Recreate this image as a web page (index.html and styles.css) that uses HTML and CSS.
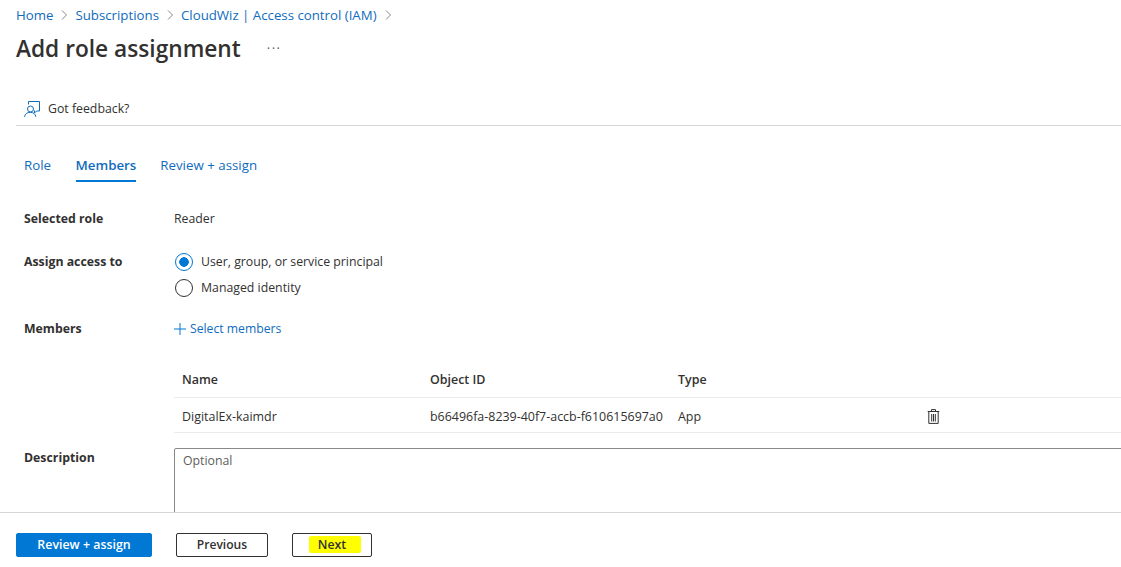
FILE: index.html
```html
<!DOCTYPE html>
<html lang="en">
<head>
<meta charset="utf-8">
<title>Add role assignment</title>
<link rel="stylesheet" href="styles.css">
</head>
<body>
<div class="page">
  <main class="main">
    <nav class="crumbs">
      <a>Home</a>
      <svg class="chev" viewBox="0 0 8 12"><path d="M2 1.500 6.500 6 2 10.500"/></svg>
      <a>Subscriptions</a>
      <svg class="chev" viewBox="0 0 8 12"><path d="M2 1.500 6.500 6 2 10.500"/></svg>
      <a>CloudWiz | Access control (IAM)</a>
      <svg class="chev" viewBox="0 0 8 12"><path d="M2 1.500 6.500 6 2 10.500"/></svg>
    </nav>
    <header class="title-row">
      <h1>Add role assignment</h1>
      <span class="more">···</span>
    </header>
    <div class="feedback">
      <svg class="fb-icon" viewBox="0 0 16 16"><path class="blue" d="M4.500 3.500V.5h11v9.500h-3l-2 2V9.500"/><circle class="blue" cx="6.500" cy="8" r="3"/><path class="blue" d="M.5 15.800c.3-2.800 2.700-4.500 5.800-4.500s5.200 1.700 5.500 4.500"/></svg>
      <span>Got feedback?</span>
    </div>
    <div class="tabs">
      <a class="tab">Role</a>
      <a class="tab active">Members</a>
      <a class="tab">Review + assign</a>
    </div>
    <div class="row row-role">
      <div class="label">Selected role</div>
      <div class="value">Reader</div>
    </div>
    <div class="row row-access">
      <div class="label">Assign access to</div>
      <div class="radios">
        <div class="radio"><span class="dot on"></span><span>User, group, or service principal</span></div>
        <div class="radio"><span class="dot"></span><span>Managed identity</span></div>
      </div>
    </div>
    <div class="row row-members">
      <div class="label">Members</div>
      <a class="select">
        <svg class="plus" viewBox="0 0 12 12"><path d="M6 0v12M0 6h12"/></svg>
        <span>Select members</span>
      </a>
    </div>
    <div class="table">
      <div class="tr th">
        <div class="c1">Name</div><div class="c2">Object ID</div><div class="c3">Type</div><div class="c4"></div>
      </div>
      <div class="tr td">
        <div class="c1">DigitalEx-kaimdr</div><div class="c2">b66496fa-8239-40f7-accb-f610615697a0</div><div class="c3">App</div>
        <div class="c4"><svg class="trash" viewBox="0 0 12 15"><path d="M.2 2.500h11.600M4 2.500V.6h4v1.900M1.300 2.500v11.900h9.400V2.500M4.200 5v7.500M6 5v7.500M7.800 5v7.500"/></svg></div>
      </div>
    </div>
    <div class="row row-desc">
      <div class="label">Description</div>
      <div class="textarea">Optional</div>
    </div>
  </main>
  <footer class="footer">
    <button class="btn primary">Review + assign</button>
    <button class="btn prev">Previous</button>
    <button class="btn next"><span class="hl">Next</span></button>
  </footer>
</div>
</body>
</html>
```
FILE: styles.css
```css
* { box-sizing: border-box; }
html, body { margin: 0; padding: 0; }
body {
  background: #fff;
  color: #323130;
  font-family: "Open Sans", "Noto Sans", sans-serif;
  font-size: 12.3px;
}
.page { width: 1121px; height: 567px; display: flex; flex-direction: column; overflow: hidden; }
.main { height: 512px; overflow: hidden; flex: none; }
.crumbs { height: 31px; padding: 0 0 2px 16px; display: flex; align-items: center; gap: 7px; color: #0f6cbd; font-size: 13.250px; }
.chev { width: 8px; height: 12px; fill: none; stroke: #8a8886; stroke-width: 1; }
.title-row { height: 36px; padding-left: 16px; display: flex; align-items: center; }
h1 { margin: 0; font-size: 22.700px; font-weight: 600; color: #323130; line-height: 36px; }
.more { margin-left: 26px; padding-bottom: 2px; color: #605e5c; font-size: 13px; letter-spacing: 1.500px; }
.feedback { margin: 24px 0 0 16px; height: 35px; border-bottom: 1px solid #d6d6d6; display: flex; align-items: center; gap: 8px; padding: 1px 0 0 8px; }
.fb-icon { width: 16px; height: 16px; fill: none; }
.blue { fill: none; stroke: #0f6cbd; stroke-width: 1; }
.tabs { margin: 26px 0 0 24px; display: flex; gap: 24px; height: 30px; font-size: 13.300px; }
.tab { color: #0f6cbd; height: 30px; line-height: 26px; }
.tab.active { font-weight: 600; margin-left: .5px; border-bottom: 2px solid #0078d4; }
.row { display: flex; padding-left: 24px; }
.label { width: 150px; font-weight: 700; color: #323130; flex: none; }
.row-role { margin-top: 28px; line-height: 18px; }
.row-access { margin-top: 25px; line-height: 18px; }
.radios { display: flex; flex-direction: column; gap: 8px; }
.radio { display: flex; align-items: center; gap: 8px; height: 18px; }
.dot { width: 18px; height: 18px; margin-left: 1px; border-radius: 50%; border: 1px solid #323130; background: #fff; flex: none; }
.dot.on { border-color: #0078d4; background: radial-gradient(circle, #0078d4 0 4.500px, #fff 5px); }
.row-members { margin-top: 23px; line-height: 18px; }
.select { color: #0f6cbd; display: flex; align-items: center; gap: 4px; font-size: 12.200px; }
.plus { width: 12px; height: 12px; fill: none; stroke: #0078d4; stroke-width: 1; }
.table { margin: 24px 0 0 174px; font-size: 12.450px; }
.tr { display: flex; align-items: center; border-bottom: 1px solid #edebe9; padding-left: 8px; }
.th { height: 36px; font-weight: 600; }
.td { height: 35px; padding-top: 2px; }
.c1 { width: 248px; }
.c2 { width: 248px; white-space: nowrap; }
.c3 { width: 249px; }
.c4 { display: flex; align-items: center; }
.trash { width: 13px; height: 15px; fill: none; stroke: #323130; stroke-width: 1; }
.row-desc { margin-top: 15px; }
.row-desc .label { line-height: 18px; padding-top: 1px; }
.textarea { flex: none; width: 960px; height: 90px; border: 1px solid #8a8886; border-radius: 2px 0 0 0; padding: 3px 8px; color: #605e5c; line-height: 18px; }
.footer { height: 55px; flex: none; border-top: 1px solid #d6d6d6; padding: 20px 0 0 16px; display: flex; align-items: flex-start; }
.btn { height: 24px; font: inherit; font-weight: 600; border-radius: 2px; padding: 0 0 1px; background: #fff; border: 1px solid #323130; color: #323130; }
.primary { width: 136px; background: #0078d4; border-color: #0078d4; color: #fff; font-size: 12.400px; }
.prev { width: 92px; margin-left: 24px; font-size: 12.100px; }
.next { width: 80px; margin-left: 24px; }
.hl { background: #ffff00; display: inline-block; margin-left: 6px; padding: 0 15px 0 9px; line-height: 17px; border-radius: 2px; }
```
